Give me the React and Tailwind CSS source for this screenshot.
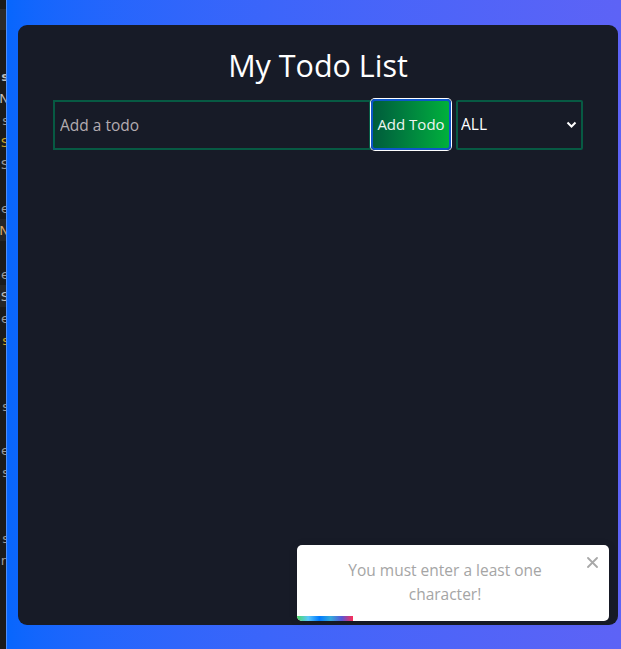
import React, { useState } from 'react';

const stripRows = [
  { ch: 's', color: 'text-[#bdbdbd]', bold: true },
  { ch: 'N', color: 'text-[#bdbdbd]' },
  { ch: 's', color: 'text-[#9a9a9a]' },
  { ch: 'S', color: 'text-[#c9a227]' },
  { ch: 'S', color: 'text-[#9a9a9a]' },
  { ch: '', color: '' },
  { ch: 'e', color: 'text-[#9a9a9a]' },
  { ch: 'N', color: 'text-[#d6a66a]', hl: true },
  { ch: '', color: '' },
  { ch: 'e', color: 'text-[#9a9a9a]' },
  { ch: 'S', color: 'text-[#bdbdbd]', hl: true },
  { ch: 'e', color: 'text-[#9a9a9a]' },
  { ch: 's', color: 'text-[#c9a227]' },
  { ch: '', color: '' },
  { ch: '', color: '' },
  { ch: 's', color: 'text-[#9a9a9a]' },
  { ch: '', color: '' },
  { ch: 'e', color: 'text-[#9a9a9a]' },
  { ch: 's', color: 'text-[#9a9a9a]' },
  { ch: '', color: '' },
  { ch: 'l', color: 'text-[#9a9a9a]' },
  { ch: 's', color: 'text-[#9a9a9a]' },
  { ch: 'n', color: 'text-[#9a9a9a]' },
];

function SideStrip() {
  return (
    <div className="flex h-full w-[7px] shrink-0 flex-col overflow-hidden border-r border-[#4f8ff7] bg-[#1b1b1b] font-['DejaVu_Sans',sans-serif]">
      <div className="mt-[9px] h-[21px] bg-[#2b2b2b]" />
      <div className="h-[35px]" />
      {stripRows.map((r, i) => (
        <div
          key={i}
          className={`flex h-[22px] items-center justify-end overflow-hidden text-[13px] leading-none ${r.color} ${r.bold ? 'font-bold' : ''} ${r.hl ? 'bg-[#262626]' : ''}`}
        >
          <span className="-mr-[3px]">{r.ch}</span>
        </div>
      ))}
    </div>
  );
}

function Toast() {
  return (
    <div className="absolute left-[297px] top-[545px] flex h-[76px] w-[312px] overflow-hidden rounded-[5px] bg-white font-['Open_Sans',sans-serif] shadow-[0_1px_10px_rgba(0,0,0,0.1)]">
      <div className="flex-1 pl-[8px] pt-[13px] text-center text-[15.5px] leading-[24px] text-[#a5a5a5]">
        You must enter a least one
        <br />
        character!
      </div>
      <button className="mr-[10px] mt-[12px] flex h-[12px] w-[14px] items-start justify-center text-[#a8a8a8]">
        <svg width="11" height="11" viewBox="0 0 11 11">
          <path d="M1 1L10 10M10 1L1 10" stroke="currentColor" strokeWidth="1.8" strokeLinecap="round" />
        </svg>
      </button>
      <div className="absolute bottom-0 left-0 h-[5px] w-[56px] bg-[linear-gradient(to_right,#4cd964,#5ac8fa,#007aff,#34aadc,#5856d6,#ff2d55)]" />
    </div>
  );
}

export default function App() {
  const [todo, setTodo] = useState('');
  const [filter, setFilter] = useState('ALL');

  return (
    <div className="relative flex h-[649px] w-[621px] overflow-hidden bg-linear-to-r from-[#0366fd] to-[#5d63f6] font-['Open_Sans',sans-serif]">
      <SideStrip />
      <div className="ml-[11px] mt-[25px] flex h-[600px] w-[600px] shrink-0 flex-col items-center rounded-[9px] bg-[#171b27]">
        <h1 className="mt-[24px] text-[30.5px] leading-[32px] text-white">My Todo List</h1>
        <div className="mt-[18px] flex items-center">
          <input
            value={todo}
            onChange={(e) => setTodo(e.target.value)}
            placeholder="Add a todo"
            className="h-[50px] w-[318px] border-2 border-[#075a43] bg-transparent px-[5px] text-[15.5px] text-white outline-none placeholder:text-[#b3abb0]"
          />
          <button className="h-[51px] w-[80px] rounded-[4px] border-2 border-[#0d56c8] bg-linear-to-r from-[#005c3b] to-[#00b13b] text-[15px] text-[#eef5f0] ring-1 ring-white">
            Add Todo
          </button>
          <div className="relative ml-[5px] h-[50px] w-[127px]">
            <select
              value={filter}
              onChange={(e) => setFilter(e.target.value)}
              className="h-full w-full appearance-none rounded-[2px] border-2 border-[#075a43] bg-transparent pl-[3px] text-[15.5px] text-white outline-none"
            >
              <option value="ALL">ALL</option>
              <option value="DONE">DONE</option>
              <option value="TODO">TODO</option>
            </select>
            <svg className="pointer-events-none absolute right-[6px] top-[21px]" width="11" height="8" viewBox="0 0 11 8">
              <path d="M1.5 1.5L5.5 5.5L9.5 1.5" stroke="white" strokeWidth="2" fill="none" />
            </svg>
          </div>
        </div>
      </div>
      <Toast />
    </div>
  );
}
